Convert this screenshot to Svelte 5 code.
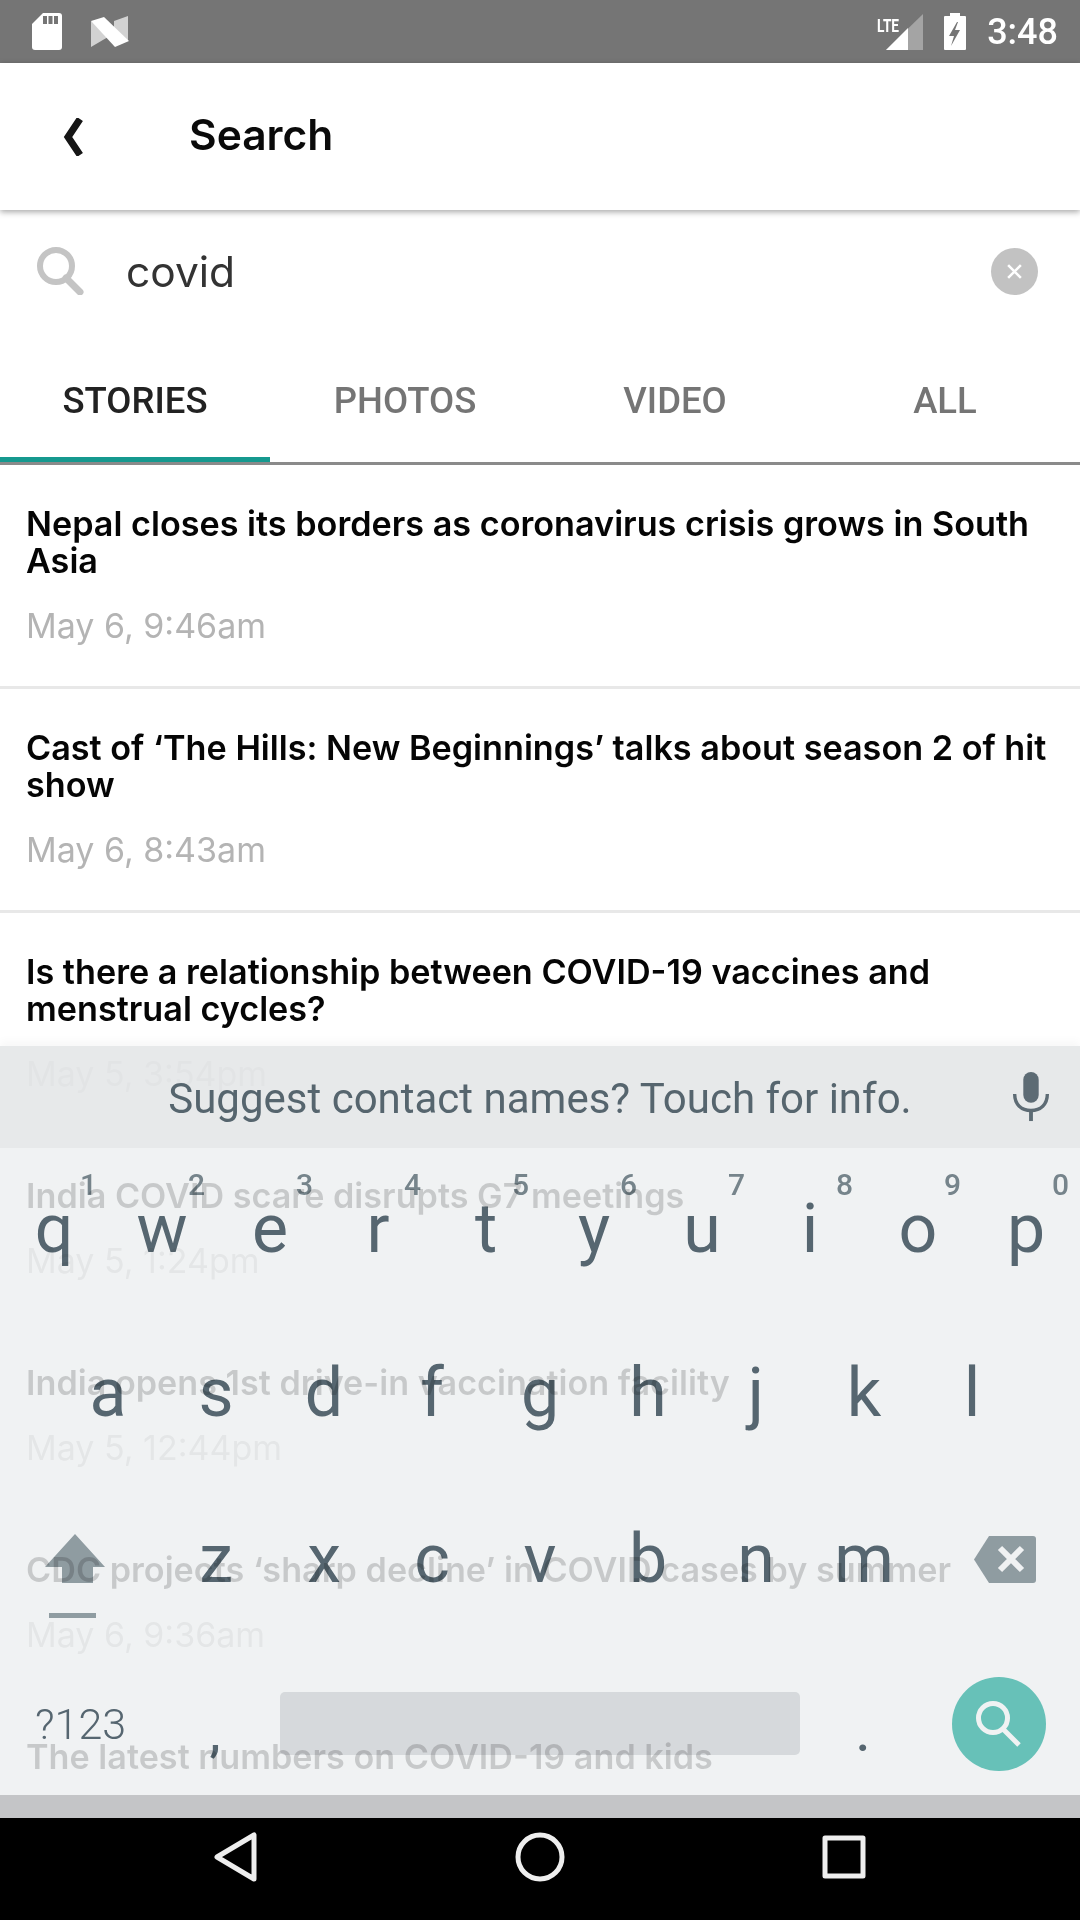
<script lang="ts">
  const tabs = ['STORIES', 'PHOTOS', 'VIDEO', 'ALL'];

  const stories = [
    { title: 'Nepal closes its borders as coronavirus crisis grows in South Asia', date: 'May 6, 9:46am' },
    { title: 'Cast of ‘The Hills: New Beginnings’ talks about season 2 of hit show', date: 'May 6, 8:43am' },
    { title: 'Is there a relationship between COVID-19 vaccines and menstrual cycles?', date: 'May 5, 3:54pm' },
    { title: 'India COVID scare disrupts G7 meetings', date: 'May 5, 1:24pm' },
    { title: 'India opens 1st drive-in vaccination facility', date: 'May 5, 12:44pm' },
    { title: 'CDC projects ‘sharp decline’ in COVID cases by summer', date: 'May 6, 9:36am' },
    { title: 'The latest numbers on COVID-19 and kids', date: '' }
  ];

  const row1 = [['q', '1'], ['w', '2'], ['e', '3'], ['r', '4'], ['t', '5'], ['y', '6'], ['u', '7'], ['i', '8'], ['o', '9'], ['p', '0']];
  const row2 = ['a', 's', 'd', 'f', 'g', 'h', 'j', 'k', 'l'];
  const row3 = ['z', 'x', 'c', 'v', 'b', 'n', 'm'];
</script>

<div class="screen">
  <div class="status">
    <div class="status-left">
      <svg width="32" height="38" viewBox="0 0 32 38">
        <path d="M12 0H28a3 3 0 0 1 3 3V34a3 3 0 0 1-3 3H4a3 3 0 0 1-3-3V11Z" fill="#fff"/>
        <path d="M12 3h4v8h-4zM17.5 3h4v8h-4zM23 3h4v8h-4z" fill="#757575"/>
      </svg>
      <svg width="38" height="32" viewBox="0 0 38 32">
        <path d="M0 5V31L17 21V16Z" fill="#d2d2d2"/>
        <path d="M37 0V25L23 12V5Z" fill="#d2d2d2"/>
        <path d="M0 5L13 1L38 25L24 31Z" fill="#fff"/>
      </svg>
    </div>
    <div class="status-right">
      <div class="signal">
        <span class="lte">LTE</span>
        <svg width="37" height="36" viewBox="0 0 37 36">
          <path d="M37 0V36H0Z" fill="#a4a4a4"/>
          <path d="M22 14V36H0Z" fill="#fff"/>
        </svg>
      </div>
      <svg width="22" height="37" viewBox="0 0 22 37">
        <path d="M6 0h10v3h5a1 1 0 0 1 1 1V36a1 1 0 0 1-1 1H1a1 1 0 0 1-1-1V4a1 1 0 0 1 1-1h5Z" fill="#fff"/>
        <path d="M13 9L5 23h5l-3 10 9-16h-5l3-8Z" fill="#757575"/>
      </svg>
      <span class="time">3:48</span>
    </div>
  </div>

  <header class="topbar">
    <svg class="back" width="24" height="38" viewBox="0 0 24 38">
      <path d="M20 1L8 19L20 37" fill="none" stroke="#161616" stroke-width="7"/>
    </svg>
    <h1>Search</h1>
  </header>

  <div class="search">
    <svg width="48" height="48" viewBox="0 0 48 48" fill="none" stroke="#c4c4c4">
      <circle cx="19" cy="19" r="16" stroke-width="6"/>
      <path d="M29 31L43 45" stroke-width="7" stroke-linecap="round"/>
    </svg>
    <span class="query">covid</span>
    <span class="clear">
      <svg width="17" height="17" viewBox="0 0 16 16"><path d="M2 2L14 14M14 2L2 14" stroke="#fff" stroke-width="2.4"/></svg>
    </span>
  </div>

  <nav class="tabs">
    {#each tabs as tab, i}
      <div class="tab" class:active={i === 0}>{tab}</div>
    {/each}
  </nav>

  <div class="list">
    {#each stories as story}
      <article class="story">
        <h2>{story.title}</h2>
        {#if story.date}
          <p>{story.date}</p>
        {/if}
      </article>
    {/each}
  </div>

  <div class="keyboard">
    <div class="suggest">
      <span>Suggest contact names? Touch for info.</span>
      <svg class="mic" width="38" height="50" viewBox="0 0 38 52" fill="none">
        <rect x="11" y="0" width="16" height="32" rx="8" fill="#5d6b74"/>
        <path d="M2 23C2 34 9 40 19 40S36 34 36 23" stroke="#5d6b74" stroke-width="3.5"/>
        <path d="M19 40V51" stroke="#5d6b74" stroke-width="4"/>
      </svg>
    </div>
    <!-- keys multiply over the list, the text behind shows through them -->
    <div class="keys">
      <div class="row first">
        {#each row1 as [key, num]}
          <div class="key"><sup>{num}</sup>{key}</div>
        {/each}
      </div>
      <div class="row">
        {#each row2 as key}
          <div class="key">{key}</div>
        {/each}
      </div>
      <div class="row">
        <div class="key wide">
          <svg class="shift" width="60" height="84" viewBox="0 0 60 84">
            <path d="M30 0L60 33H48V49H17V33H0Z" fill="#98a4a9"/>
            <rect x="4" y="79" width="47" height="5" fill="#98a4a9"/>
          </svg>
        </div>
        {#each row3 as key}
          <div class="key">{key}</div>
        {/each}
        <div class="key wide">
          <svg class="del" width="62" height="47" viewBox="0 0 62 47">
            <path d="M15 0H59a3 3 0 0 1 3 3V44a3 3 0 0 1-3 3H15L0 23.5Z" fill="#98a4a9"/>
            <path d="M26 12L48 34M48 12L26 34" stroke="#fff" stroke-width="6"/>
          </svg>
        </div>
      </div>
      <div class="row bottom">
        <div class="sym">?123</div>
        <div class="punct">,</div>
        <div class="space"></div>
        <div class="punct dot">.</div>
        <div class="go">
          <svg width="46" height="46" viewBox="0 0 46 46" fill="none" stroke="#fff">
            <circle cx="17" cy="17" r="14.5" stroke-width="5"/>
            <path d="M27 28L43 44" stroke-width="5"/>
          </svg>
        </div>
      </div>
    </div>
  </div>

  <div class="softbar">
    <div class="strip"></div>
    <div class="nav">
      <svg width="44" height="50" viewBox="0 0 44 50" fill="none" stroke="#eee" stroke-width="5" stroke-linejoin="round"><path d="M40 3V47L3 25Z"/></svg>
      <svg width="50" height="50" viewBox="0 0 50 50" fill="none" stroke="#eee" stroke-width="5"><circle cx="25" cy="25" r="22"/></svg>
      <svg width="44" height="44" viewBox="0 0 44 44" fill="none" stroke="#eee" stroke-width="5" stroke-linejoin="round"><rect x="3" y="3" width="38" height="38"/></svg>
    </div>
  </div>
</div>

<style>
  :global(body) {
    margin: 0;
    background: #fff;
  }

  .screen {
    position: relative;
    width: 1080px;
    height: 1920px;
    overflow: hidden;
    background: #fff;
    font-family: Inter, "Open Sans", sans-serif;
    display: flex;
    flex-direction: column;
  }

  .status {
    flex: none;
    height: 63px;
    box-sizing: border-box;
    background: #757575;
    display: flex;
    align-items: center;
    justify-content: space-between;
    padding: 0 22px 0 31px;
  }

  .status-left {
    display: flex;
    align-items: center;
    gap: 28px;
  }

  .status-right {
    display: flex;
    align-items: center;
    gap: 21px;
  }

  .signal {
    position: relative;
    width: 46px;
    height: 36px;
    display: flex;
    justify-content: flex-end;
  }

  .lte {
    position: absolute;
    left: 0;
    top: 0;
    font: 700 19px Roboto, sans-serif;
    color: #fff;
    transform: scaleX(0.72);
    transform-origin: left top;
  }

  .time {
    font: 500 36px Roboto, sans-serif;
    color: #fff;
  }

  .topbar {
    flex: none;
    height: 147px;
    box-sizing: border-box;
    display: flex;
    align-items: center;
    padding-left: 60px;
    gap: 105px;
    background: #fff;
    box-shadow: 0 2px 6px rgba(0, 0, 0, 0.35);
    position: relative;
  }

  .topbar h1 {
    margin: 0 0 4px;
    font-size: 42.5px;
    font-weight: 600;
    color: #0a0a0a;
  }

  .search {
    flex: none;
    height: 120px;
    box-sizing: border-box;
    display: flex;
    align-items: center;
    padding: 2px 42px 0 37px;
  }

  .query {
    margin-left: 41px;
    flex: 1;
    font-size: 42.5px;
    color: #333;
  }

  .clear {
    width: 47px;
    height: 47px;
    border-radius: 50%;
    background: #c2c2c2;
    display: flex;
    align-items: center;
    justify-content: center;
  }

  .tabs {
    flex: none;
    height: 135px;
    box-sizing: border-box;
    display: grid;
    grid-template-columns: repeat(4, 1fr);
    border-bottom: 3px solid #8a8a8a;
  }

  .tab {
    font: 500 36.5px Roboto, sans-serif;
    color: #757575;
    text-align: center;
    padding-top: 49px;
    height: 132px;
    box-sizing: border-box;
  }

  .tab.active {
    color: #222;
    border-bottom: 5px solid #16998f;
  }

  .story {
    box-sizing: border-box;
    padding: 40px 20px 40px 26px;
    border-bottom: 3px solid #e8e8e8;
  }

  /* dividers don't show through the keyboard */
  .story:nth-child(n + 3) {
    border-bottom-color: transparent;
  }

  .story h2 {
    margin: 0;
    font-size: 34.2px;
    line-height: 37px;
    font-weight: 600;
    color: #050505;
  }

  .story p {
    margin: 27px 0 0;
    font-size: 34px;
    line-height: 40px;
    color: #b4b4b4;
  }

  .keyboard {
    position: absolute;
    left: 0;
    right: 0;
    top: 1046px;
    height: 749px;
    background: rgba(237, 239, 241, 0.84);
    box-shadow: 0 -5px 8px rgba(0, 0, 0, 0.03);
    display: flex;
    flex-direction: column;
    color: #56656e;
    font-family: Roboto, sans-serif;
  }

  .suggest {
    height: 102px;
    flex: none;
    display: flex;
    align-items: center;
    justify-content: center;
    padding-top: 2px;
    box-sizing: border-box;
    background: rgba(225, 226, 228, 0.6);
    font-size: 42px;
    position: relative;
  }

  .mic {
    position: absolute;
    right: 30px;
    top: 26px;
  }

  .keys {
    flex: 1;
    display: flex;
    flex-direction: column;
    color: #5b6b75;
    mix-blend-mode: multiply;
  }

  .row {
    display: flex;
    justify-content: center;
    height: 166px;
    flex: none;
  }

  .row.first {
    height: 164px;
  }

  .key {
    position: relative;
    width: 108px;
    text-align: center;
    font-size: 68px;
    line-height: 162px;
  }

  .key.wide {
    width: 162px;
    height: 162px;
    display: flex;
    align-items: center;
    justify-content: center;
  }

  .shift {
    margin: 34px 12px 0 0;
  }

  .del {
    margin-left: 12px;
  }

  .key sup {
    position: absolute;
    right: 11px;
    top: 19px;
    font-size: 30px;
    line-height: 36px;
    font-weight: 500;
    color: #7d8b92;
  }

  .row.bottom {
    height: 151px;
    box-sizing: border-box;
    align-items: center;
    justify-content: flex-start;
    padding: 8px 0 0 35px;
  }

  .sym {
    width: 150px;
    font-size: 43px;
    font-weight: 300;
  }

  .space {
    width: 520px;
    height: 63px;
    margin-left: 35px;
    border-radius: 5px;
    background: #e4e5e7;
  }

  .punct {
    width: 60px;
    padding-top: 20px;
    font-size: 50px;
    font-weight: 500;
    text-align: center;
  }

  .punct.dot {
    margin-left: 33px;
  }

  .go {
    width: 94px;
    height: 94px;
    border-radius: 50%;
    background: #6dccc1;
    display: flex;
    align-items: center;
    justify-content: center;
    margin-left: 59px;
  }

  .softbar {
    position: absolute;
    left: 0;
    right: 0;
    bottom: 0;
  }

  .strip {
    height: 23px;
    background: #c4c5c7;
  }

  .nav {
    height: 102px;
    box-sizing: border-box;
    background: #000;
    display: grid;
    grid-template-columns: repeat(3, 1fr);
    justify-items: center;
    align-items: center;
    padding: 0 84px 24px;
  }
</style>
